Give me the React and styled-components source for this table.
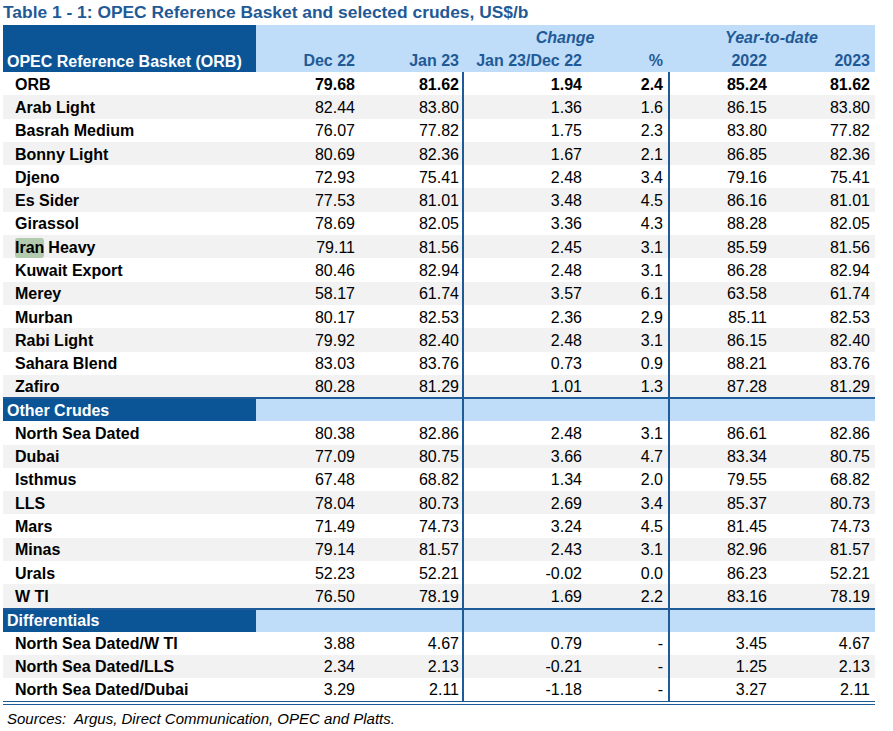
import React from "react";
import styled, { createGlobalStyle } from "styled-components";

const DARK = "#0b5597";
const LIGHT = "#bfdcf8";
const LINE = "#1f5b99";
const HEAD_TEXT = "#1f5a96";
const STRIPE = "#f2f2f2";
const COLS = "253px 104px 102px 125px 81px 104px 103px";

const Global = createGlobalStyle`
  html, body { margin: 0; padding: 0; background: #fff; }
  body { font-family: "Liberation Sans", Arial, sans-serif; color: #000; }
`;

const Page = styled.div`
  padding-left: 3px;
  width: 872px;
`;

const Title = styled.div`
  font-size: 17.4px;
  font-weight: bold;
  color: ${HEAD_TEXT};
  height: 25px;
  line-height: 25px;
  white-space: nowrap;
`;

const Header = styled.div`
  display: grid;
  grid-template-columns: ${COLS};
  grid-template-rows: 23.5px 23.5px;
  background: ${LIGHT};
  font-size: 16px;
  font-weight: bold;
  color: ${HEAD_TEXT};
`;

const HeadMain = styled.div`
  grid-row: 1 / span 2;
  grid-column: 1;
  background: ${DARK};
  color: #fff;
  display: flex;
  align-items: center;
  padding: 26px 0 0 4px;
  white-space: nowrap;
`;

const HeadGroup = styled.div`
  grid-row: 1;
  grid-column: ${(p) => p.$col} / span 2;
  font-style: italic;
  display: flex;
  align-items: center;
  justify-content: center;
  padding-top: 2px;
`;

const HeadCell = styled.div`
  grid-row: 2;
  grid-column: ${(p) => p.$col};
  display: flex;
  align-items: center;
  justify-content: flex-end;
  padding: 2px ${(p) => p.$pr ?? 5}px 0 0;
  white-space: nowrap;
`;

const Body = styled.div`
  border-bottom: 4px double ${LINE};
`;

const Row = styled.div`
  display: grid;
  grid-template-columns: ${COLS};
  height: ${(p) => p.$h ?? 23.3}px;
  background: ${(p) => (p.$stripe ? STRIPE : "#fff")};
  font-size: 16px;
  & > * { padding-top: 2px; }
`;

const Label = styled.div`
  font-weight: bold;
  padding-left: 12px;
  display: flex;
  align-items: center;
  white-space: nowrap;
`;

const Num = styled.div`
  display: flex;
  align-items: center;
  justify-content: flex-end;
  padding-right: ${(p) => p.$pr ?? 5}px;
  font-weight: ${(p) => (p.$bold ? "bold" : "normal")};
  border-left: ${(p) => (p.$divider ? `2px solid ${LINE}` : "none")};
`;

const SectionRow = styled.div`
  display: grid;
  grid-template-columns: ${COLS};
  height: 24px;
  box-sizing: border-box;
  border-top: 2px solid ${LINE};
  background: ${LIGHT};
  font-size: 16px;
`;

const SectionTitle = styled.div`
  background: ${DARK};
  color: #fff;
  font-weight: bold;
  padding: 1px 0 0 4px;
  display: flex;
  align-items: center;
`;

const SectionFill = styled.div`
  border-left: ${(p) => (p.$divider ? `2px solid ${LINE}` : "none")};
`;

const Highlight = styled.span`
  background: #b2cbae;
  border-radius: 3px;
  padding: 1px 0;
  margin-right: 4px;
`;

const Sources = styled.div`
  font-style: italic;
  font-size: 15px;
  padding-left: 4px;
  margin-top: 4px;
  line-height: 20px;
  white-space: pre;
`;

const orb = [
  ["ORB", "79.68", "81.62", "1.94", "2.4", "85.24", "81.62"],
  ["Arab Light", "82.44", "83.80", "1.36", "1.6", "86.15", "83.80"],
  ["Basrah Medium", "76.07", "77.82", "1.75", "2.3", "83.80", "77.82"],
  ["Bonny Light", "80.69", "82.36", "1.67", "2.1", "86.85", "82.36"],
  ["Djeno", "72.93", "75.41", "2.48", "3.4", "79.16", "75.41"],
  ["Es Sider", "77.53", "81.01", "3.48", "4.5", "86.16", "81.01"],
  ["Girassol", "78.69", "82.05", "3.36", "4.3", "88.28", "82.05"],
  ["Iran Heavy", "79.11", "81.56", "2.45", "3.1", "85.59", "81.56"],
  ["Kuwait Export", "80.46", "82.94", "2.48", "3.1", "86.28", "82.94"],
  ["Merey", "58.17", "61.74", "3.57", "6.1", "63.58", "61.74"],
  ["Murban", "80.17", "82.53", "2.36", "2.9", "85.11", "82.53"],
  ["Rabi Light", "79.92", "82.40", "2.48", "3.1", "86.15", "82.40"],
  ["Sahara Blend", "83.03", "83.76", "0.73", "0.9", "88.21", "83.76"],
  ["Zafiro", "80.28", "81.29", "1.01", "1.3", "87.28", "81.29"],
];

const others = [
  ["North Sea Dated", "80.38", "82.86", "2.48", "3.1", "86.61", "82.86"],
  ["Dubai", "77.09", "80.75", "3.66", "4.7", "83.34", "80.75"],
  ["Isthmus", "67.48", "68.82", "1.34", "2.0", "79.55", "68.82"],
  ["LLS", "78.04", "80.73", "2.69", "3.4", "85.37", "80.73"],
  ["Mars", "71.49", "74.73", "3.24", "4.5", "81.45", "74.73"],
  ["Minas", "79.14", "81.57", "2.43", "3.1", "82.96", "81.57"],
  ["Urals", "52.23", "52.21", "-0.02", "0.0", "86.23", "52.21"],
  ["WTI", "76.50", "78.19", "1.69", "2.2", "83.16", "78.19"],
];

const diffs = [
  ["North Sea Dated/WTI", "3.88", "4.67", "0.79", "-", "3.45", "4.67"],
  ["North Sea Dated/LLS", "2.34", "2.13", "-0.21", "-", "1.25", "2.13"],
  ["North Sea Dated/Dubai", "3.29", "2.11", "-1.18", "-", "3.27", "2.11"],
];

function renderLabel(name) {
  if (name === "Iran Heavy") {
    return (
      <>
        <Highlight>Iran</Highlight>Heavy
      </>
    );
  }
  if (name === "WTI") return "W TI";
  if (name === "North Sea Dated/WTI") return "North Sea Dated/W TI";
  return name;
}

function DataRow({ row, stripe, bold, h }) {
  const [name, a, b, c, d, e, f] = row;
  return (
    <Row $stripe={stripe} $h={h}>
      <Label>{renderLabel(name)}</Label>
      <Num $bold={bold}>{a}</Num>
      <Num $bold={bold} $pr={3}>{b}</Num>
      <Num $bold={bold} $divider>{c}</Num>
      <Num $bold={bold}>{d}</Num>
      <Num $bold={bold} $divider>{e}</Num>
      <Num $bold={bold}>{f}</Num>
    </Row>
  );
}

function Section({ title }) {
  return (
    <SectionRow>
      <SectionTitle>{title}</SectionTitle>
      <SectionFill />
      <SectionFill />
      <SectionFill $divider />
      <SectionFill />
      <SectionFill $divider />
      <SectionFill />
    </SectionRow>
  );
}

export default function App() {
  return (
    <Page>
      <Global />
      <Title>Table 1 - 1: OPEC Reference Basket and selected crudes, US$/b</Title>
      <Header>
        <HeadMain>OPEC Reference Basket (ORB)</HeadMain>
        <HeadGroup $col={4}>Change</HeadGroup>
        <HeadGroup $col={6}>Year-to-date</HeadGroup>
        <HeadCell $col={2}>Dec 22</HeadCell>
        <HeadCell $col={3} $pr={3}>Jan 23</HeadCell>
        <HeadCell $col={4}>Jan 23/Dec 22</HeadCell>
        <HeadCell $col={5}>%</HeadCell>
        <HeadCell $col={6}>2022</HeadCell>
        <HeadCell $col={7}>2023</HeadCell>
      </Header>
      <Body>
        {orb.map((r, i) => (
          <DataRow key={r[0]} row={r} stripe={i % 2 === 1} bold={i === 0} h={i === 13 ? 22.4 : 23.3} />
        ))}
        <Section title="Other Crudes" />
        {others.map((r, i) => (
          <DataRow key={r[0]} row={r} stripe={i % 2 === 1} h={23.3} />
        ))}
        <Section title="Differentials" />
        {diffs.map((r, i) => (
          <DataRow key={r[0]} row={r} stripe={i % 2 === 1} h={23} />
        ))}
      </Body>
      <Sources>{"Sources:  Argus, Direct Communication, OPEC and Platts."}</Sources>
    </Page>
  );
}
